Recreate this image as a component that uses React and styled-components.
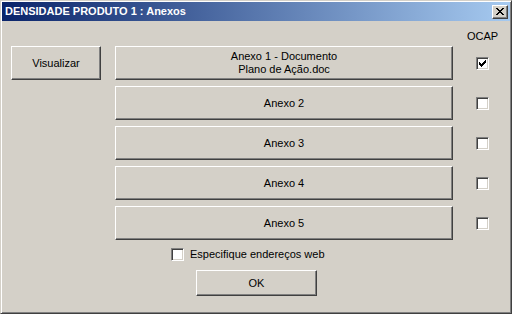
import React, { useState } from 'react';
import styled, { createGlobalStyle } from 'styled-components';

const GlobalStyle = createGlobalStyle`
  html, body {
    margin: 0;
    padding: 0;
    background: #d4d0c8;
  }
  * { box-sizing: border-box; }
`;

const Window = styled.div`
  width: 512px;
  height: 314px;
  display: flex;
  flex-direction: column;
  padding: 1px;
  background: #d4d0c8;
  border: 1px solid;
  border-color: #d4d0c8 #404040 #404040 #d4d0c8;
  box-shadow: inset 1px 1px #ffffff, inset -1px -1px #808080;
  font-family: "Liberation Sans", Arial, sans-serif;
  font-size: 11px;
  color: #000;
`;

const TitleBar = styled.div`
  height: 19px;
  display: flex;
  align-items: center;
  justify-content: space-between;
  padding: 0 2px 0 3px;
  background: linear-gradient(to right, #0a246a, #a6caf0);
`;

const Title = styled.span`
  color: #fff;
  font-weight: bold;
  font-size: 11px;
  line-height: 13px;
`;

const Raised = `
  background: #d4d0c8;
  border: 1px solid;
  border-color: #ffffff #404040 #404040 #ffffff;
  box-shadow: inset -1px -1px #808080;
  font-family: "Liberation Sans", Arial, sans-serif;
  font-size: 11px;
  line-height: 13px;
  color: #000;
  padding: 0;
  cursor: default;
`;

const CloseButton = styled.button`
  ${Raised}
  width: 16px;
  height: 14px;
  display: flex;
  align-items: center;
  justify-content: center;
`;

const Content = styled.div`
  flex: 1;
  padding: 9px 0 0 9px;
  display: flex;
  flex-direction: column;
`;

const Grid = styled.div`
  display: grid;
  grid-template-columns: 90px 338px 30px;
  grid-template-rows: 10px repeat(5, 34px);
  column-gap: 14px;
  row-gap: 6px;
`;

const ColumnLabel = styled.span`
  grid-column: 3;
  grid-row: 1;
  align-self: start;
  text-align: center;
  line-height: 13px;
  white-space: nowrap;
`;

const Button = styled.button`
  ${Raised}
  grid-column: ${p => p.$col};
  grid-row: ${p => p.$row};
  width: 100%;
  height: 100%;
  text-align: center;
`;

const CheckSlot = styled.div`
  grid-column: 3;
  grid-row: ${p => p.$row};
  justify-self: center;
  align-self: center;
`;

const Box = styled.span`
  width: 13px;
  height: 13px;
  display: flex;
  align-items: center;
  justify-content: center;
  background: #fff;
  border: 1px solid;
  border-color: #808080 #ffffff #ffffff #808080;
  box-shadow: inset 1px 1px #404040, inset -1px -1px #d4d0c8;
`;

const WebRow = styled.label`
  margin: 8px 0 0 160px;
  height: 13px;
  display: flex;
  align-items: center;
  gap: 6px;
  line-height: 13px;
`;

const OkButton = styled.button`
  ${Raised}
  margin: 9px 0 0 185px;
  width: 121px;
  height: 26px;
`;

const CheckMark = () => (
  <svg width="7" height="7" viewBox="0 0 7 7" shapeRendering="crispEdges">
    <path
      fill="#000"
      d="M6 0h1v3h-1zM5 1h1v3h-1zM4 2h1v3h-1zM3 3h1v3h-1zM2 4h1v3h-1zM1 3h1v3h-1zM0 2h1v3h-1z"
    />
  </svg>
);

const CloseGlyph = () => (
  <svg width="8" height="7" viewBox="0 0 8 7" shapeRendering="crispEdges">
    <path
      fill="#000"
      d="M0 0h2v1h-2zM6 0h2v1h-2zM1 1h2v1h-2zM5 1h2v1h-2zM2 2h4v1h-4zM3 3h2v1h-2zM2 4h4v1h-4zM1 5h2v1h-2zM5 5h2v1h-2zM0 6h2v1h-2zM6 6h2v1h-2z"
    />
  </svg>
);

const Checkbox = ({ checked, onToggle }) => (
  <Box onClick={onToggle}>{checked && <CheckMark />}</Box>
);

const anexos = [
  ['Anexo 1 - Documento', 'Plano de Ação.doc'],
  ['Anexo 2'],
  ['Anexo 3'],
  ['Anexo 4'],
  ['Anexo 5'],
];

export default function App() {
  const [ocap, setOcap] = useState([true, false, false, false, false]);
  const [web, setWeb] = useState(false);

  const toggle = i => setOcap(prev => prev.map((v, j) => (j === i ? !v : v)));

  return (
    <>
      <GlobalStyle />
      <Window>
        <TitleBar>
          <Title>DENSIDADE PRODUTO 1 : Anexos</Title>
          <CloseButton aria-label="Fechar"><CloseGlyph /></CloseButton>
        </TitleBar>
        <Content>
          <Grid>
            <ColumnLabel>OCAP</ColumnLabel>
            <Button $col={1} $row={2}>Visualizar</Button>
            {anexos.map((lines, i) => (
              <React.Fragment key={i}>
                <Button $col={2} $row={i + 2}>
                  {lines.map((l, k) => (
                    <React.Fragment key={k}>
                      {k > 0 && <br />}
                      {l}
                    </React.Fragment>
                  ))}
                </Button>
                <CheckSlot $row={i + 2}>
                  <Checkbox checked={ocap[i]} onToggle={() => toggle(i)} />
                </CheckSlot>
              </React.Fragment>
            ))}
          </Grid>
          <WebRow>
            <Checkbox checked={web} onToggle={() => setWeb(!web)} />
            Especifique endereços web
          </WebRow>
          <OkButton>OK</OkButton>
        </Content>
      </Window>
    </>
  );
}
